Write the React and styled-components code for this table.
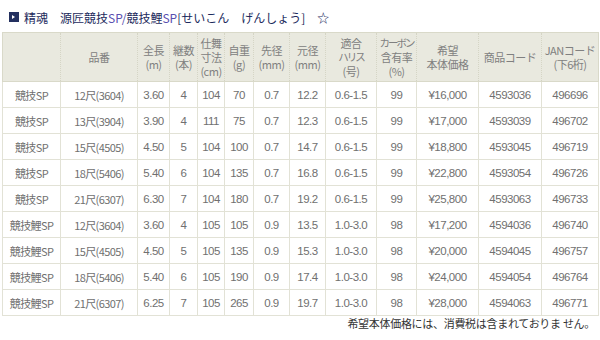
import React from 'react';
import styled, { createGlobalStyle } from 'styled-components';

const GlobalStyle = createGlobalStyle`
  body {
    margin: 0;
    background: #ffffff;
    font-family: "Liberation Sans", "Noto Sans CJK JP", sans-serif;
  }
`;

const Page = styled.div`
  width: 600px;
  padding: 8px 2px 0 2px;
  box-sizing: border-box;
`;

const Title = styled.div`
  display: flex;
  align-items: center;
  gap: 5px;
  height: 18px;
  margin: 0 0 6px 7px;
  font-family: "Noto Sans CJK JP", sans-serif;
  font-size: 12px;
  color: #1c2a5c;
  white-space: pre;
`;

const TitleIcon = styled.span`
  display: inline-flex;
  align-items: center;
  justify-content: center;
  width: 10px;
  height: 10px;
  background: #23305f;
`;

const Accent = styled.span`
  color: #5a4fb0;
`;

const Table = styled.table`
  width: 596px;
  table-layout: fixed;
  border-collapse: collapse;
  border: 1px solid #d9d9c9;
  color: #707070;
`;

const HeadRow = styled.tr`
  height: 49px;
`;

const BodyRow = styled.tr`
  height: 26px;
`;

const HeadCell = styled.th`
  padding: 0;
  background: #e9e9df;
  border-bottom: 1px solid #d9d9c9;
  border-left: 1px dotted #d5d5c5;
  font-weight: normal;
  color: #808080;
  text-align: center;
  vertical-align: middle;
  font-family: "Noto Sans CJK JP", sans-serif;
  font-size: 11px;
  white-space: nowrap;
  &:first-child {
    border-left: none;
  }
`;

const HeadLine = styled.div`
  height: 14px;
  line-height: 14px;
  letter-spacing: ${(p) => (p.$tight ? '-2px' : '-0.5px')};
  font-size: ${(p) => (p.$tight ? '10.5px' : '11px')};
`;

const Cell = styled.td`
  padding: 0;
  border: 1px solid #e2e2d6;
  text-align: center;
  vertical-align: middle;
  white-space: nowrap;
  font-family: ${(p) => (p.$jp ? '"Noto Sans CJK JP", sans-serif' : '"Liberation Sans", sans-serif')};
  font-size: ${(p) => (p.$jp ? '11px' : '11.5px')};
  letter-spacing: ${(p) => (p.$jp ? '-0.6px' : '-0.5px')};
`;

const Note = styled.div`
  text-align: right;
  padding: 0 3px 0 0;
  line-height: 15px;
  font-family: "Noto Sans CJK JP", sans-serif;
  font-size: 11px;
  letter-spacing: -0.3px;
  color: #333;
`;

const widths = [58, 77, 32, 28, 27, 29, 36, 36, 51, 40, 62, 63, 57];

// a leading "!" marks a line set with tight (narrow kana) spacing
const headers = [
  [],
  ['品番'],
  ['全長', '(m)'],
  ['継数', '(本)'],
  ['仕舞', '寸法', '(cm)'],
  ['自重', '(g)'],
  ['先径', '(mm)'],
  ['元径', '(mm)'],
  ['適合', '!ハリス', '(号)'],
  ['!カーボン', '含有率', '(%)'],
  ['希望', '本体価格'],
  ['商品コード'],
  ['JANコード', '(下6桁)'],
];

const rows = [
  ['競技SP', '12尺(3604)', '3.60', '4', '104', '70', '0.7', '12.2', '0.6-1.5', '99', '¥16,000', '4593036', '496696'],
  ['競技SP', '13尺(3904)', '3.90', '4', '111', '75', '0.7', '12.3', '0.6-1.5', '99', '¥17,000', '4593039', '496702'],
  ['競技SP', '15尺(4505)', '4.50', '5', '104', '100', '0.7', '14.7', '0.6-1.5', '99', '¥18,800', '4593045', '496719'],
  ['競技SP', '18尺(5406)', '5.40', '6', '104', '135', '0.7', '16.8', '0.6-1.5', '99', '¥22,800', '4593054', '496726'],
  ['競技SP', '21尺(6307)', '6.30', '7', '104', '180', '0.7', '19.2', '0.6-1.5', '99', '¥25,800', '4593063', '496733'],
  ['競技鯉SP', '12尺(3604)', '3.60', '4', '105', '105', '0.9', '13.5', '1.0-3.0', '98', '¥17,200', '4594036', '496740'],
  ['競技鯉SP', '15尺(4505)', '4.50', '5', '105', '135', '0.9', '15.3', '1.0-3.0', '98', '¥20,000', '4594045', '496757'],
  ['競技鯉SP', '18尺(5406)', '5.40', '6', '105', '190', '0.9', '17.4', '1.0-3.0', '98', '¥24,000', '4594054', '496764'],
  ['競技鯉SP', '21尺(6307)', '6.25', '7', '105', '265', '0.9', '19.7', '1.0-3.0', '98', '¥28,000', '4594063', '496771'],
];

const App = () => (
  <Page>
    <GlobalStyle />
    <Title>
      <TitleIcon>
        <svg width="6" height="6" viewBox="0 0 6 6">
          <path d="M1 1 L4 3 L1 5 Z" fill="#fff" />
        </svg>
      </TitleIcon>
      <span>
        精魂　源匠競技<Accent>SP/</Accent>競技鯉<Accent>SP</Accent>[せいこん　げんしょう]　☆
      </span>
    </Title>
    <Table>
      <colgroup>
        {widths.map((w, i) => (
          <col key={i} style={{ width: w }} />
        ))}
      </colgroup>
      <thead>
        <HeadRow>
          {headers.map((lines, i) => (
            <HeadCell key={i}>
              {lines.map((l, j) => {
                const tight = l.startsWith('!');
                return (
                  <HeadLine key={j} $tight={tight}>
                    {tight ? l.slice(1) : l}
                  </HeadLine>
                );
              })}
            </HeadCell>
          ))}
        </HeadRow>
      </thead>
      <tbody>
        {rows.map((r, i) => (
          <BodyRow key={i}>
            {r.map((v, j) => (
              <Cell key={j} $jp={j < 2}>
                {v}
              </Cell>
            ))}
          </BodyRow>
        ))}
      </tbody>
    </Table>
    <Note>希望本体価格には、消費税は含まれておりま せん。</Note>
  </Page>
);

export default App;
